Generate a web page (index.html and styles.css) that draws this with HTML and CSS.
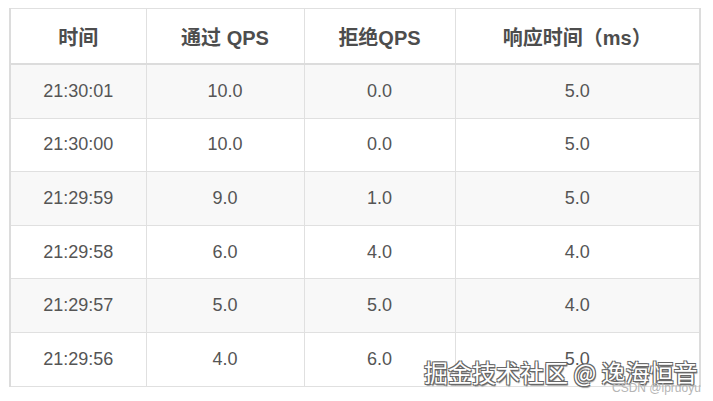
FILE: index.html
```html
<!DOCTYPE html>
<html lang="zh-CN">
<head>
<meta charset="utf-8">
<link rel="stylesheet" href="styles.css">
</head>
<body>
<div class="page">
  <table class="qps">
    <colgroup>
      <col class="c1"><col class="c2"><col class="c3"><col class="c4">
    </colgroup>
    <thead>
      <tr><th>时间</th><th>通过 QPS</th><th>拒绝QPS</th><th>响应时间（ms）</th></tr>
    </thead>
    <tbody>
      <tr><td>21:30:01</td><td>10.0</td><td>0.0</td><td>5.0</td></tr>
      <tr><td>21:30:00</td><td>10.0</td><td>0.0</td><td>5.0</td></tr>
      <tr><td>21:29:59</td><td>9.0</td><td>1.0</td><td>5.0</td></tr>
      <tr><td>21:29:58</td><td>6.0</td><td>4.0</td><td>4.0</td></tr>
      <tr><td>21:29:57</td><td>5.0</td><td>5.0</td><td>4.0</td></tr>
      <tr><td>21:29:56</td><td>4.0</td><td>6.0</td><td>5.0</td></tr>
    </tbody>
  </table>
  <div class="watermark">掘金技术社区 @ 逸海恒音</div>
  <div class="csdn">CSDN @lpruoyu</div>
</div>
</body>
</html>
```
FILE: styles.css
```css
html, body {
  margin: 0;
  padding: 0;
  background: #fff;
}
.page {
  position: relative;
  width: 713px;
  height: 401px;
  padding: 8px 0 0 9px;
  box-sizing: border-box;
  font-family: "Liberation Sans", Arial, "Noto Sans CJK SC", sans-serif;
}
.qps {
  border-collapse: collapse;
  table-layout: fixed;
  width: 690px;
  border-top: 1px solid #e6e6e6;
  border-left: 2px solid #dcdcdc;
  border-right: 2px solid #dcdcdc;
  border-bottom: 1px solid #e0e0e0;
}
.c1 { width: 136px; }
.c2 { width: 158px; }
.c3 { width: 151px; }
.c4 { width: 245px; }
.qps th, .qps td {
  border: 1px solid #e0e0e0;
  text-align: center;
  padding: 0;
}
.qps th {
  height: 54px;
  font-size: 20px;
  font-weight: bold;
  color: #4d4d4d;
  border-bottom: 2px solid #dcdcdc;
}
.qps td {
  height: 52.6px;
  font-size: 18px;
  color: #555;
}
.qps tbody tr:nth-child(odd) td {
  background: #f8f8f8;
}
.watermark {
  position: absolute;
  left: 424px;
  top: 357px;
  font-size: 24px;
  line-height: 30px;
  white-space: nowrap;
  font-family: "Noto Sans CJK SC", sans-serif;
  color: #fff;
  text-shadow: -1px -1px 0 #666, 1px -1px 0 #666, -1px 1px 0 #666, 1px 1px 0 #666, 1px 2px 1px #999;
}
.csdn {
  position: absolute;
  left: 612px;
  top: 381px;
  font-size: 12px;
  line-height: 14px;
  color: #b5b5b5;
  white-space: nowrap;
}
```
